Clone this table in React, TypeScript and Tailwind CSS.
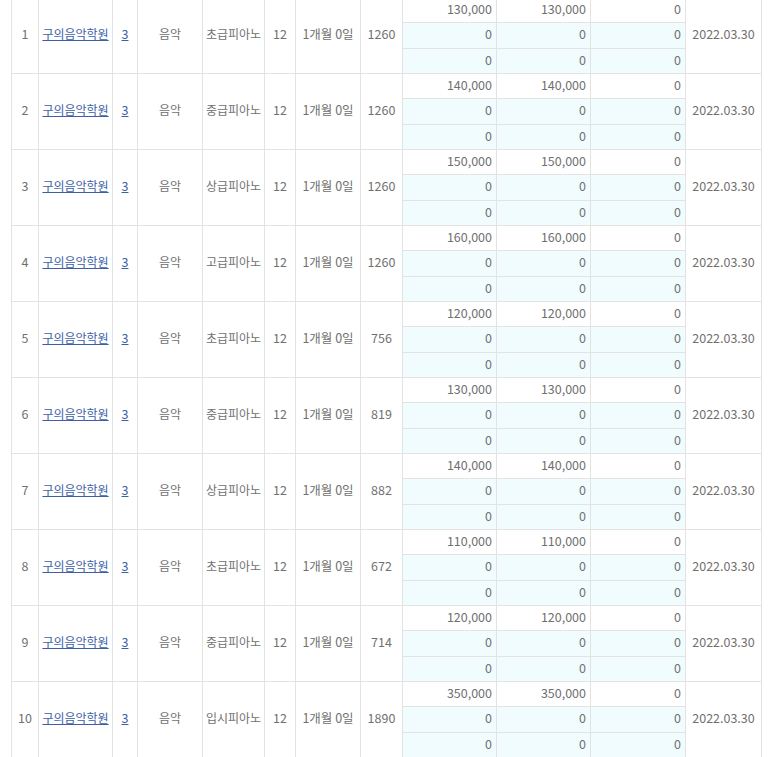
const rows = [
  { no: 1, subject: '초급피아노', hours: '1260', fee: '130,000' },
  { no: 2, subject: '중급피아노', hours: '1260', fee: '140,000' },
  { no: 3, subject: '상급피아노', hours: '1260', fee: '150,000' },
  { no: 4, subject: '고급피아노', hours: '1260', fee: '160,000' },
  { no: 5, subject: '초급피아노', hours: '756', fee: '120,000' },
  { no: 6, subject: '중급피아노', hours: '819', fee: '130,000' },
  { no: 7, subject: '상급피아노', hours: '882', fee: '140,000' },
  { no: 8, subject: '초급피아노', hours: '672', fee: '110,000' },
  { no: 9, subject: '중급피아노', hours: '714', fee: '120,000' },
  { no: 10, subject: '입시피아노', hours: '1890', fee: '350,000' },
];

const td = 'border border-[#e3e3e3] text-center align-middle p-0 pb-[3px]';
const amt = 'border border-[#e3e3e3] text-right p-0 pr-[4px] pb-[2px]';
const ko = 'text-[12px]';

export default function App() {
  return (
    <div className="bg-white w-[773px] h-[757px] overflow-hidden pl-[11px]">
      <table
        className="table-fixed border-collapse w-[750px] -mt-[3px] text-[12.5px] text-[#707070] leading-none"
        style={{ fontFamily: '"Noto Sans CJK KR", "Noto Sans", sans-serif' }}
      >
        <colgroup>
          <col className="w-[27px]" />
          <col className="w-[74px]" />
          <col className="w-[25px]" />
          <col className="w-[65px]" />
          <col className="w-[62px]" />
          <col className="w-[31px]" />
          <col className="w-[65px]" />
          <col className="w-[42px]" />
          <col className="w-[94px]" />
          <col className="w-[94px]" />
          <col className="w-[95px]" />
          <col className="w-[76px]" />
        </colgroup>
        <tbody>
          {rows.map((r) => [
            <tr key={r.no + 'a'} className="h-[25px]">
              <td rowSpan={3} className={td}>{r.no}</td>
              <td rowSpan={3} className={td + ' ' + ko}>
                <a href="#" className="text-[#3d5fa8] underline">구의음악학원</a>
              </td>
              <td rowSpan={3} className={td}>
                <a href="#" className="text-[#3d5fa8] underline">3</a>
              </td>
              <td rowSpan={3} className={td + ' ' + ko}>음악</td>
              <td rowSpan={3} className={td + ' ' + ko}>{r.subject}</td>
              <td rowSpan={3} className={td}>12</td>
              <td rowSpan={3} className={td}>1개월 0일</td>
              <td rowSpan={3} className={td}>{r.hours}</td>
              <td className={amt}>{r.fee}</td>
              <td className={amt}>{r.fee}</td>
              <td className={amt}>0</td>
              <td rowSpan={3} className={td}>2022.03.30</td>
            </tr>,
            <tr key={r.no + 'b'} className="h-[26px]">
              <td className={amt + ' bg-[#f0fcfd]'}>0</td>
              <td className={amt + ' bg-[#f0fcfd]'}>0</td>
              <td className={amt + ' bg-[#f0fcfd]'}>0</td>
            </tr>,
            <tr key={r.no + 'c'} className="h-[25px]">
              <td className={amt + ' bg-[#f0fcfd]'}>0</td>
              <td className={amt + ' bg-[#f0fcfd]'}>0</td>
              <td className={amt + ' bg-[#f0fcfd]'}>0</td>
            </tr>,
          ])}
        </tbody>
      </table>
    </div>
  );
}
